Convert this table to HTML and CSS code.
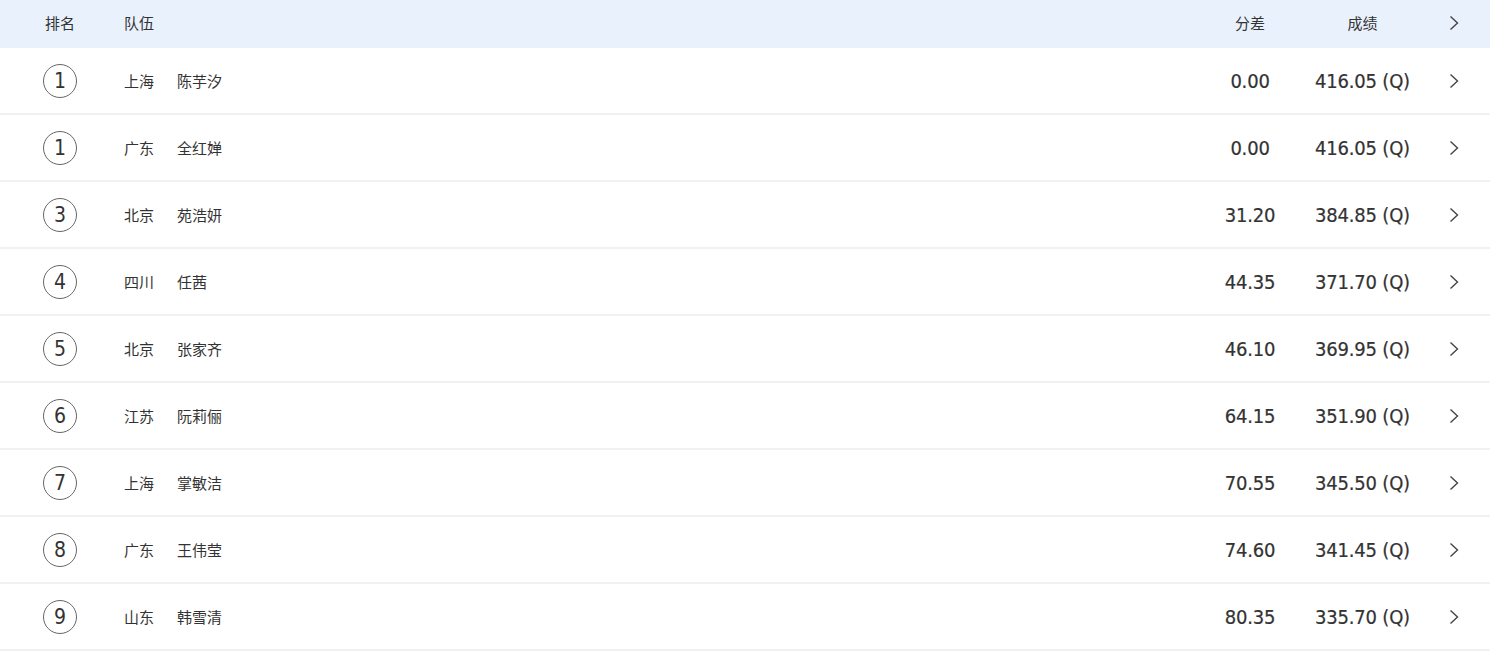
FILE: index.html
```html
<!DOCTYPE html>
<html lang="zh">
<head>
<meta charset="utf-8">
<link rel="stylesheet" href="styles.css">
</head>
<body>
<div class="table">
  <div class="row head">
    <div class="c-rank">排名</div>
    <div class="c-team">队伍</div>
    <div class="c-diff">分差</div>
    <div class="c-score">成绩</div>
    <div class="c-arrow"><svg viewBox="0 0 10 16" width="10" height="16"><path d="M1.5 1.5 L8.5 8 L1.5 14.5" fill="none" stroke="#444" stroke-width="1.4"/></svg></div>
  </div>
  <div class="row"><div class="c-rank"><span class="circle">1</span></div><div class="c-team"><span class="prov">上海</span><span>陈芋汐</span></div><div class="c-diff num">0.00</div><div class="c-score num">416.05 (Q)</div><div class="c-arrow"><svg viewBox="0 0 10 16" width="10" height="16"><path d="M1.5 1.5 L8.5 8 L1.5 14.5" fill="none" stroke="#444" stroke-width="1.4"/></svg></div></div>
  <div class="row"><div class="c-rank"><span class="circle">1</span></div><div class="c-team"><span class="prov">广东</span><span>全红婵</span></div><div class="c-diff num">0.00</div><div class="c-score num">416.05 (Q)</div><div class="c-arrow"><svg viewBox="0 0 10 16" width="10" height="16"><path d="M1.5 1.5 L8.5 8 L1.5 14.5" fill="none" stroke="#444" stroke-width="1.4"/></svg></div></div>
  <div class="row"><div class="c-rank"><span class="circle">3</span></div><div class="c-team"><span class="prov">北京</span><span>苑浩妍</span></div><div class="c-diff num">31.20</div><div class="c-score num">384.85 (Q)</div><div class="c-arrow"><svg viewBox="0 0 10 16" width="10" height="16"><path d="M1.5 1.5 L8.5 8 L1.5 14.5" fill="none" stroke="#444" stroke-width="1.4"/></svg></div></div>
  <div class="row"><div class="c-rank"><span class="circle">4</span></div><div class="c-team"><span class="prov">四川</span><span>任茜</span></div><div class="c-diff num">44.35</div><div class="c-score num">371.70 (Q)</div><div class="c-arrow"><svg viewBox="0 0 10 16" width="10" height="16"><path d="M1.5 1.5 L8.5 8 L1.5 14.5" fill="none" stroke="#444" stroke-width="1.4"/></svg></div></div>
  <div class="row"><div class="c-rank"><span class="circle">5</span></div><div class="c-team"><span class="prov">北京</span><span>张家齐</span></div><div class="c-diff num">46.10</div><div class="c-score num">369.95 (Q)</div><div class="c-arrow"><svg viewBox="0 0 10 16" width="10" height="16"><path d="M1.5 1.5 L8.5 8 L1.5 14.5" fill="none" stroke="#444" stroke-width="1.4"/></svg></div></div>
  <div class="row"><div class="c-rank"><span class="circle">6</span></div><div class="c-team"><span class="prov">江苏</span><span>阮莉俪</span></div><div class="c-diff num">64.15</div><div class="c-score num">351.90 (Q)</div><div class="c-arrow"><svg viewBox="0 0 10 16" width="10" height="16"><path d="M1.5 1.5 L8.5 8 L1.5 14.5" fill="none" stroke="#444" stroke-width="1.4"/></svg></div></div>
  <div class="row"><div class="c-rank"><span class="circle">7</span></div><div class="c-team"><span class="prov">上海</span><span>掌敏洁</span></div><div class="c-diff num">70.55</div><div class="c-score num">345.50 (Q)</div><div class="c-arrow"><svg viewBox="0 0 10 16" width="10" height="16"><path d="M1.5 1.5 L8.5 8 L1.5 14.5" fill="none" stroke="#444" stroke-width="1.4"/></svg></div></div>
  <div class="row"><div class="c-rank"><span class="circle">8</span></div><div class="c-team"><span class="prov">广东</span><span>王伟莹</span></div><div class="c-diff num">74.60</div><div class="c-score num">341.45 (Q)</div><div class="c-arrow"><svg viewBox="0 0 10 16" width="10" height="16"><path d="M1.5 1.5 L8.5 8 L1.5 14.5" fill="none" stroke="#444" stroke-width="1.4"/></svg></div></div>
  <div class="row"><div class="c-rank"><span class="circle">9</span></div><div class="c-team"><span class="prov">山东</span><span>韩雪清</span></div><div class="c-diff num">80.35</div><div class="c-score num">335.70 (Q)</div><div class="c-arrow"><svg viewBox="0 0 10 16" width="10" height="16"><path d="M1.5 1.5 L8.5 8 L1.5 14.5" fill="none" stroke="#444" stroke-width="1.4"/></svg></div></div>
  <div class="row"><div class="c-rank"><span class="circle">10</span></div><div class="c-team"><span class="prov">湖北</span><span>陈艺文</span></div><div class="c-diff num">82.10</div><div class="c-score num">333.95 (Q)</div><div class="c-arrow"><svg viewBox="0 0 10 16" width="10" height="16"><path d="M1.5 1.5 L8.5 8 L1.5 14.5" fill="none" stroke="#444" stroke-width="1.4"/></svg></div></div>
</div>
</body>
</html>
```
FILE: styles.css
```css
html, body {
  margin: 0;
  padding: 0;
  background: #fff;
  overflow: hidden;
}
body {
  font-family: "Noto Sans CJK SC", "Noto Sans", sans-serif;
  color: #333;
}
.table {
  width: 1490px;
}
.row {
  display: grid;
  grid-template-columns: 120px 1fr 110px 115px 70px;
  align-items: center;
  height: 65px;
  border-bottom: 2px solid #f1f1f1;
  font-size: 15px;
}
.row.head {
  height: 48px;
  box-sizing: border-box;
  padding-bottom: 3px;
  border-bottom: 0;
  background: #e9f1fd;
  font-size: 15px;
  color: #333;
}
.c-rank {
  display: flex;
  justify-content: center;
}
.head .c-rank {
  justify-content: flex-start;
  padding-left: 45px;
}
.c-team {
  padding-left: 4px;
  display: flex;
  gap: 23px;
}
.c-diff, .c-score {
  text-align: center;
}
.c-arrow {
  display: flex;
  justify-content: center;
  padding-right: 2px;
}
.c-arrow svg {
  display: block;
}
.circle {
  width: 32px;
  height: 32px;
  border: 1.5px solid #666;
  border-radius: 50%;
  display: flex;
  align-items: center;
  justify-content: center;
  font-family: "DejaVu Sans Condensed", "DejaVu Sans", sans-serif;
  font-size: 21px;
  color: #333;
}
.num {
  font-family: "DejaVu Sans Condensed", "DejaVu Sans", sans-serif;
  font-size: 20px;
  color: #333;
  letter-spacing: -0.2px;
  -webkit-text-stroke: 0.2px #333;
}
```
